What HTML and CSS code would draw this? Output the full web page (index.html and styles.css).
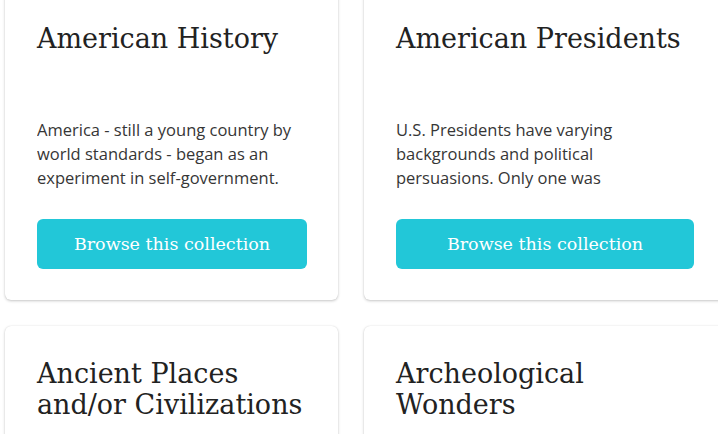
FILE: index.html
```html
<!DOCTYPE html>
<html lang="en">
<head>
<meta charset="utf-8">
<title>Collections</title>
<link rel="stylesheet" href="styles.css">
</head>
<body>
<div class="grid">
  <div class="card card-narrow">
    <h2 class="title">American History</h2>
    <p class="desc">America - still a young country by world standards - began as an experiment in self-government.</p>
    <a class="btn" href="#">Browse this collection</a>
  </div>
  <div class="card card-wide">
    <h2 class="title">American Presidents</h2>
    <p class="desc">U.S. Presidents have varying backgrounds and political persuasions. Only one was</p>
    <a class="btn" href="#">Browse this collection</a>
  </div>
  <div class="card card-narrow">
    <h2 class="title">Ancient Places and/or Civilizations</h2>
    <p class="desc">Long before our own time, great civilizations rose and fell.</p>
    <a class="btn" href="#">Browse this collection</a>
  </div>
  <div class="card card-wide">
    <h2 class="title">Archeological Wonders</h2>
    <p class="desc">Discoveries from the ground up reveal how people lived.</p>
    <a class="btn" href="#">Browse this collection</a>
  </div>
</div>
</body>
</html>
```

FILE: styles.css
```css
html, body {
  margin: 0;
  padding: 0;
  background: #ffffff;
  overflow: hidden;
}

.grid {
  display: grid;
  grid-template-columns: 333px 361px;
  column-gap: 26px;
  row-gap: 26px;
  padding-left: 5px;
  margin-top: -9px;
}

.card {
  background: #fff;
  border-radius: 6px;
  box-shadow: 0 1px 3px rgba(0, 0, 0, 0.22), 0 0 1px rgba(0, 0, 0, 0.12);
  padding: 32px 31px 31px 32px;
  display: flex;
  flex-direction: column;
}

.title {
  margin: 0;
  font-family: "DejaVu Serif", serif;
  font-weight: normal;
  font-size: 27px;
  line-height: 31px;
  min-height: 62px;
  color: #222222;
}

.desc {
  margin: 33px 0 0 0;
  max-width: 272px;
  height: 72px;
  overflow: hidden;
  font-family: "Open Sans", sans-serif;
  font-size: 16.5px;
  line-height: 24px;
  color: #363636;
}

.btn {
  margin-top: 29px;
  height: 50px;
  border-radius: 6px;
  background: #22c7d8;
  color: #ffffff;
  text-decoration: none;
  font-family: "DejaVu Serif", serif;
  font-size: 17.5px;
  display: flex;
  align-items: center;
  justify-content: center;
}
```
